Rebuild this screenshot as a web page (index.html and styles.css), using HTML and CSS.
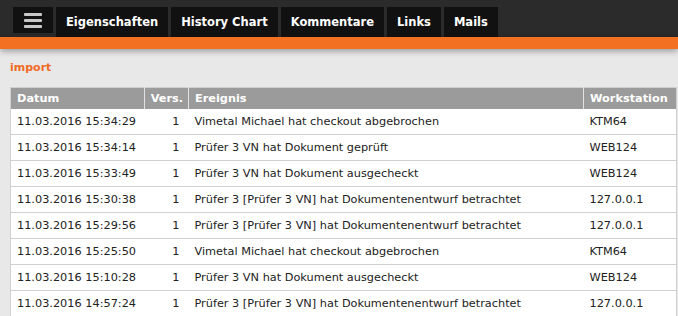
FILE: index.html
```html
<!DOCTYPE html>
<html lang="de">
<head>
    <meta charset="UTF-8" />
    <title>Historie</title>
    <link rel="stylesheet" href="styles.css">
</head>
<body>
    <div class="topbar">
        <div class="menu">
            <span class="bar"></span>
            <span class="bar"></span>
            <span class="bar"></span>
        </div>
        <a class="tab" href="#">Eigenschaften</a>
        <a class="tab" href="#">History Chart</a>
        <a class="tab" href="#">Kommentare</a>
        <a class="tab" href="#">Links</a>
        <a class="tab" href="#">Mails</a>
    </div>
    <div class="stripe"></div>

    <div class="content">
        <h2 class="doc">import</h2>
        <table class="history">
            <colgroup>
                <col class="c-date">
                <col class="c-ver">
                <col class="c-event">
                <col class="c-ws">
            </colgroup>
            <thead>
                <tr>
                    <th>Datum</th>
                    <th class="num">Vers.</th>
                    <th>Ereignis</th>
                    <th>Workstation</th>
                </tr>
            </thead>
            <tbody>
                <tr><td>11.03.2016 15:34:29</td><td class="num">1</td><td>Vimetal Michael hat checkout abgebrochen</td><td>KTM64</td></tr>
                <tr><td>11.03.2016 15:34:14</td><td class="num">1</td><td>Prüfer 3 VN hat Dokument geprüft</td><td>WEB124</td></tr>
                <tr><td>11.03.2016 15:33:49</td><td class="num">1</td><td>Prüfer 3 VN hat Dokument ausgecheckt</td><td>WEB124</td></tr>
                <tr><td>11.03.2016 15:30:38</td><td class="num">1</td><td>Prüfer 3 [Prüfer 3 VN] hat Dokumentenentwurf betrachtet</td><td>127.0.0.1</td></tr>
                <tr><td>11.03.2016 15:29:56</td><td class="num">1</td><td>Prüfer 3 [Prüfer 3 VN] hat Dokumentenentwurf betrachtet</td><td>127.0.0.1</td></tr>
                <tr><td>11.03.2016 15:25:50</td><td class="num">1</td><td>Vimetal Michael hat checkout abgebrochen</td><td>KTM64</td></tr>
                <tr><td>11.03.2016 15:10:28</td><td class="num">1</td><td>Prüfer 3 VN hat Dokument ausgecheckt</td><td>WEB124</td></tr>
                <tr><td>11.03.2016 14:57:24</td><td class="num">1</td><td>Prüfer 3 [Prüfer 3 VN] hat Dokumentenentwurf betrachtet</td><td>127.0.0.1</td></tr>
            </tbody>
        </table>
    </div>
</body>
</html>
```

FILE: styles.css
```css
body {
    margin: 0;
    background-color: #e8e8e8;
    font-family: "DejaVu Sans", Verdana, sans-serif;
    font-size: 11.3px;
    color: #222;
    overflow: hidden;
}

/* top navigation */
.topbar {
    display: flex;
    align-items: flex-start;
    gap: 3px;
    height: 30px;
    padding: 7px 0 0 13px;
    background-color: #2b2b2b;
}

.menu {
    display: flex;
    flex-direction: column;
    justify-content: center;
    align-items: center;
    gap: 3px;
    width: 40px;
    height: 26px;
    background-color: #111;
}

.bar {
    display: block;
    width: 18px;
    height: 3px;
    border-radius: 1px;
    background-color: #c8c8c8;
}

.tab {
    display: flex;
    align-items: center;
    height: 30px;
    padding: 0 10px;
    background-color: #111;
    color: #fff;
    font-weight: bold;
    font-size: 11.5px;
    text-decoration: none;
}

.stripe {
    height: 12px;
    background-color: #f36f21;
    box-shadow: 0 2px 6px rgba(0, 0, 0, 0.35);
}

/* content */
.content {
    padding: 12px 2px 0 10px;
}

.doc {
    margin: 0 0 13px 0;
    font-size: 11px;
    font-weight: bold;
    color: #f06a1f;
}

.history {
    width: 666px;
    table-layout: fixed;
    border-collapse: collapse;
    background-color: #fff;
    border: 1px solid #d0d0d0;
}

.c-date { width: 134px; }
.c-ver { width: 44px; }
.c-event { width: 395px; }
.c-ws { width: 93px; }

.history th {
    height: 21px;
    padding: 0 6px;
    background-color: #9b9b9b;
    color: #fff;
    font-weight: bold;
    text-align: left;
    border-left: 1px solid #e2e2e2;
}

.history th:first-child {
    border-left: none;
}

.history td {
    height: 25px;
    padding: 0 6px;
    border-bottom: 1px solid #d0d0d0;
    white-space: nowrap;
}

.history .num {
    text-align: right;
    padding-right: 5px;
    padding-left: 0;
}

.history td.num {
    padding-right: 9px;
}
```
